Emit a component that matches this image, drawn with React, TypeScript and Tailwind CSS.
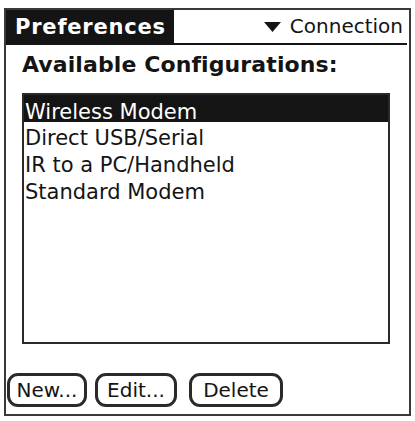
import React from "react";

const items = ["Wireless Modem", "Direct USB/Serial", "IR to a PC/Handheld", "Standard Modem"];

export default function App() {
  return (
    <div className="w-[415px] h-[421px] bg-white overflow-hidden pt-[8px] pl-[4px]" style={{ fontFamily: '"DejaVu Sans", sans-serif' }}>
      <div className="w-[407px] h-[408px] border-2 border-[#3a3a3a] flex flex-col">
        <div className="flex h-[35px]">
          <div className="w-[168px] h-full bg-[#141414] text-white font-bold text-[21px] leading-[35px] pl-[9px] tracking-[0.8px]">
            Preferences
          </div>
          <div className="flex-1 flex items-center justify-end pr-[4px] border-b-2 border-[#141414] mr-[2px]">
            <svg width="17" height="10" viewBox="0 0 17 10" className="mr-[9px]">
              <polygon points="0,0 17,0 8.5,10" fill="#141414" />
            </svg>
            <span className="text-[20px] text-[#141414] leading-[33px]">Connection</span>
          </div>
        </div>
        <div className="mt-[7px] ml-[16px] font-bold text-[22px] leading-[26px] text-[#141414] tracking-[0.1px]">
          Available Configurations:
        </div>
        <div className="mt-[15px] ml-[16px] w-[368px] h-[251px] border-2 border-[#2a2a2a] flex flex-col">
          {items.map((t, i) => (
            <div
              key={t}
              className={
                i === 0
                  ? "h-[27px] shrink-0 bg-[#141414] text-white text-[21px] leading-[35px] pl-[1px] whitespace-nowrap"
                  : "h-[27px] shrink-0 text-[#141414] text-[21px] leading-[33px] pl-[1px] whitespace-nowrap"
              }
            >
              {t}
            </div>
          ))}
        </div>
        <div className="mt-[29px] ml-[1px] flex">
          <button className="w-[80px] h-[34px] border-[3px] border-[#2a2a2a] rounded-[11px] text-[20px] leading-[26px] text-[#141414] bg-white">
            New...
          </button>
          <button className="ml-[8px] w-[82px] h-[34px] border-[3px] border-[#2a2a2a] rounded-[11px] text-[20px] leading-[26px] text-[#141414] bg-white">
            Edit...
          </button>
          <button className="ml-[12px] w-[94px] h-[34px] border-[3px] border-[#2a2a2a] rounded-[11px] text-[20px] leading-[26px] text-[#141414] bg-white">
            Delete
          </button>
        </div>
      </div>
    </div>
  );
}
